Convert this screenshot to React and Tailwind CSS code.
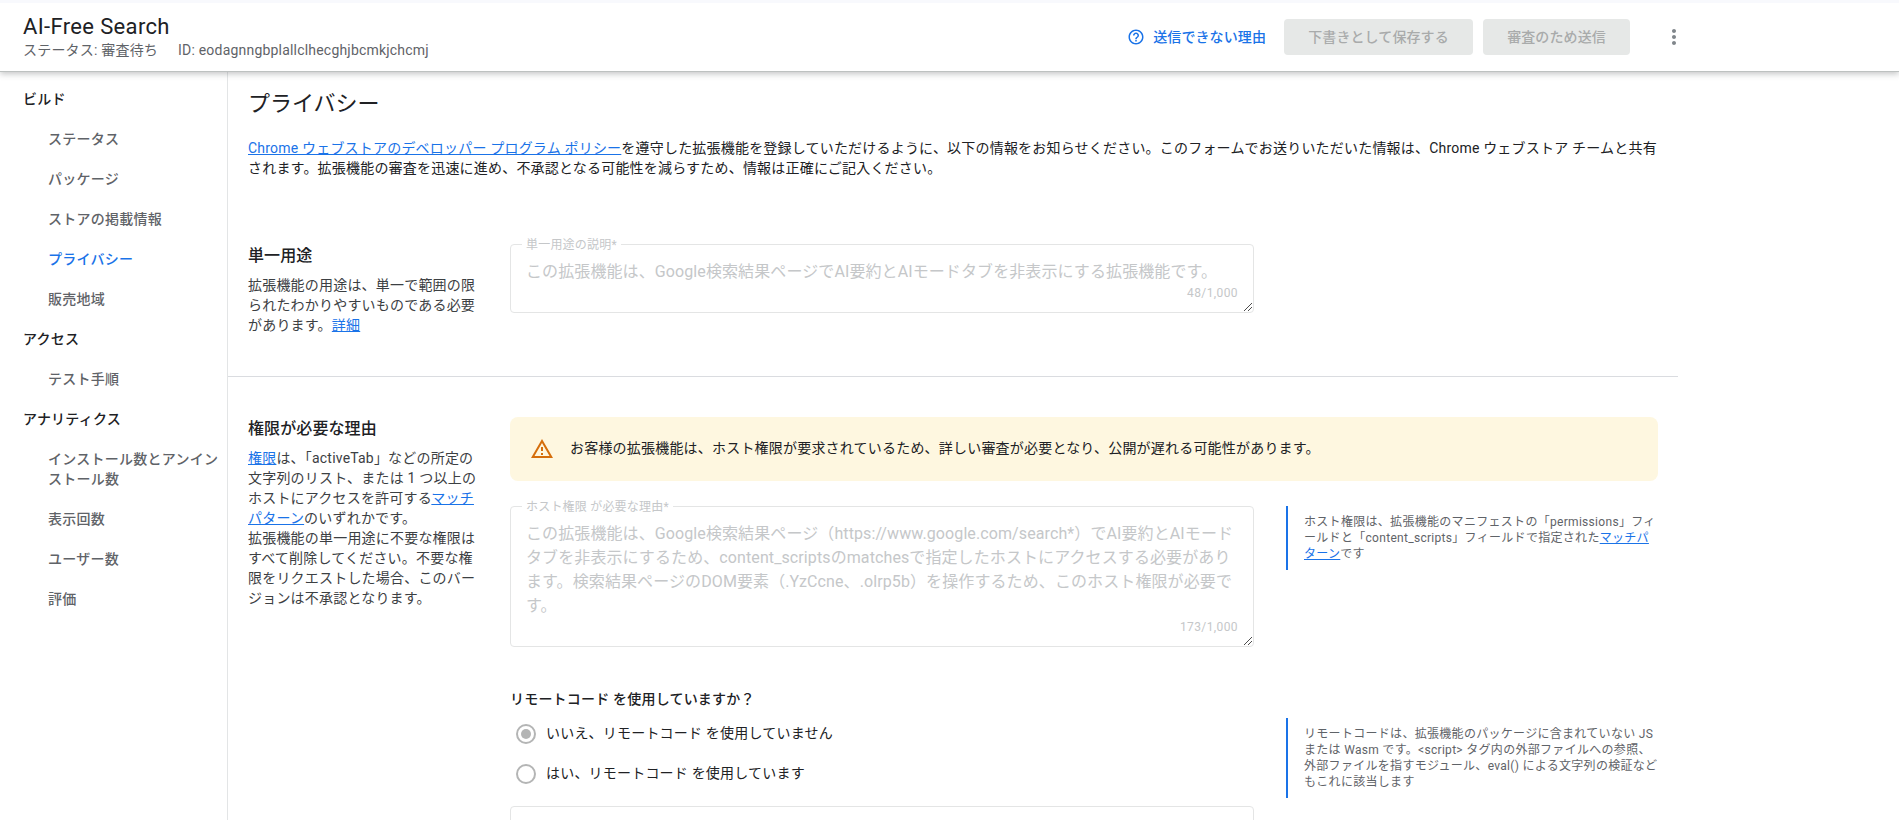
const FONT = "font-['Roboto','Noto_Sans_CJK_JP',sans-serif]";

function NavHead({ children }) {
  return <div className="h-10 pl-[23px] pt-2.5 text-sm leading-5 font-medium tracking-[0.2px] text-[#202124]">{children}</div>;
}

function NavItem({ children, active }) {
  return (
    <a className={"block py-2.5 pl-12 text-sm leading-5 font-medium tracking-[0.25px] " + (active ? "text-[#1a73e8]" : "text-[#5f6368]")}>
      {children}
    </a>
  );
}

function Link({ children }) {
  return <a className="text-[#1a73e8] underline">{children}</a>;
}

function Grip() {
  return (
    <svg className="absolute right-[1px] bottom-[1px]" width="8" height="8" viewBox="0 0 8 8" shapeRendering="crispEdges">
      {[[0, 7], [1, 6], [2, 5], [3, 4], [4, 3], [5, 2], [6, 1], [7, 0], [4, 7], [5, 6], [6, 5], [7, 4]].map(([x, y]) => (
        <rect key={x + "-" + y} x={x} y={y} width="1" height="1" fill="#4d4d4d" />
      ))}
    </svg>
  );
}

function Field({ label, count, height, children }) {
  return (
    <div className={"relative flex w-[744px] flex-col rounded-[4px] border border-[#e4e5e5] text-[#c5c7c9] " + height}>
      <span className="absolute -top-2.5 left-[11px] bg-white px-1 text-xs leading-5 tracking-[0.2px]">{label}</span>
      <div className="mt-[15px] pr-4 pl-[15px] text-base leading-6 tracking-[0.1px]">{children}</div>
      <div className="-mt-px pr-[15px] text-right text-xs leading-5 tracking-[0.4px]">{count}</div>
      <Grip />
    </div>
  );
}

function Hint({ children }) {
  return (
    <aside className="ml-8 w-[372px] border-l-2 border-[#1a73e8] py-2 pl-4 text-xs leading-4 tracking-[0.3px] text-[#5f6368]">
      {children}
    </aside>
  );
}

function Radio({ checked, children }) {
  return (
    <label className="flex h-10 items-center pl-1.5 text-sm leading-5 tracking-[0.2px] text-[#202124]">
      <span className="flex size-5 items-center justify-center rounded-full border-2 border-[#b4b5b5]">
        {checked && <span className="size-2.5 rounded-full bg-[#b4b5b5]" />}
      </span>
      <span className="-mt-0.5 pl-2.5">{children}</span>
    </label>
  );
}

export default function App() {
  return (
    <div lang="ja" className={"flex h-[820px] w-full flex-col overflow-hidden bg-white text-[#202124] " + FONT}>
      <div className="z-20 h-[3px] shrink-0 bg-[#f8f9fd]" />
      <header className="z-10 flex h-[68px] shrink-0 items-start bg-white shadow-[0_1px_0_#bdc1c0,0_3px_6px_rgba(60,64,67,0.3)]">
        <div className="flex-1 pt-2.5 pl-[23px]">
          <h1 className="text-[22px] leading-7 tracking-[0.35px]">AI-Free Search</h1>
          <div className="-mt-px flex gap-5 text-sm leading-5 tracking-[0.2px] text-[#5f6368]">
            <span>ステータス: 審査待ち</span>
            <span>ID: eodagnngbplallclhecghjbcmkjchcmj</span>
          </div>
        </div>
        <div className="flex items-center pt-4 pr-[213px] text-sm font-medium tracking-[0.1px]">
          <svg width="18" height="18" viewBox="0 0 24 24" fill="#1a73e8">
            <path d="M11 18h2v-2h-2v2zm1-16C6.48 2 2 6.48 2 12s4.48 10 10 10 10-4.48 10-10S17.52 2 12 2zm0 18c-4.41 0-8-3.59-8-8s3.59-8 8-8 8 3.59 8 8-3.59 8-8 8zm0-14c-2.21 0-4 1.79-4 4h2c0-1.1.9-2 2-2s2 .9 2 2c0 2-3 1.75-3 5h2c0-2.25 3-2.5 3-5 0-2.21-1.79-4-4-4z" />
          </svg>
          <span className="pr-[18px] pl-2 text-[#1a73e8]">送信できない理由</span>
          <button className="h-9 w-[189px] rounded-[4px] bg-[#e6e8e7] text-[#a9abab]">下書きとして保存する</button>
          <button className="ml-2.5 h-9 w-[147px] rounded-[4px] bg-[#e6e8e7] text-[#a9abab]">審査のため送信</button>
          <svg className="ml-8" width="24" height="24" viewBox="0 0 24 24" fill="#80868b">
            <path d="M12 8c1.1 0 2-.9 2-2s-.9-2-2-2-2 .9-2 2 .9 2 2 2zm0 2c-1.1 0-2 .9-2 2s.9 2 2 2 2-.9 2-2-.9-2-2-2zm0 6c-1.1 0-2 .9-2 2s.9 2 2 2 2-.9 2-2-.9-2-2-2z" />
          </svg>
        </div>
      </header>
      <div className="flex min-h-0 flex-1">
        <nav className="w-[228px] shrink-0 border-r border-[#e3e5e6] pt-2">
          <NavHead>ビルド</NavHead>
          <NavItem>ステータス</NavItem>
          <NavItem>パッケージ</NavItem>
          <NavItem>ストアの掲載情報</NavItem>
          <NavItem active>プライバシー</NavItem>
          <NavItem>販売地域</NavItem>
          <NavHead>アクセス</NavHead>
          <NavItem>テスト手順</NavItem>
          <NavHead>アナリティクス</NavHead>
          <NavItem>インストール数とアンインストール数</NavItem>
          <NavItem>表示回数</NavItem>
          <NavItem>ユーザー数</NavItem>
          <NavItem>評価</NavItem>
        </nav>
        <main className="w-[1450px] shrink-0">
          <section className="h-[306px] border-b border-[#dadce0] px-5 pt-[19px]">
            <h2 className="text-[22px] leading-7">プライバシー</h2>
            <p className="mt-5 text-sm leading-5 tracking-[0.2px]">
              <Link>Chrome ウェブストアのデベロッパー プログラム ポリシー</Link>
              を遵守した拡張機能を登録していただけるように、以下の情報をお知らせください。このフォームでお送りいただいた情報は、Chrome ウェブストア チームと共有されます。拡張機能の審査を迅速に進め、不承認となる可能性を減らすため、情報は正確にご記入ください。
            </p>
            <div className="mt-[66px] flex items-start">
              <div className="w-[262px] shrink-0 pr-6">
                <h3 className="text-base leading-6 font-medium tracking-[0.1px]">単一用途</h3>
                <p className="mt-[7px] text-sm leading-5 tracking-[0.2px] text-[#3c4043]">
                  拡張機能の用途は、単一で範囲の限られたわかりやすいものである必要があります。<Link>詳細</Link>
                </p>
              </div>
              <Field label="単一用途の説明*" count="48/1,000" height="h-[69px]">
                この拡張機能は、Google検索結果ページでAI要約とAIモードタブを非表示にする拡張機能です。
              </Field>
            </div>
          </section>
          <section className="flex px-5 pt-10">
            <div className="w-[262px] shrink-0 pr-6">
              <h3 className="text-base leading-6 font-medium tracking-[0.1px]">権限が必要な理由</h3>
              <p className="mt-[7px] text-sm leading-5 tracking-[0.2px] text-[#3c4043]">
                <Link>権限</Link>は、「activeTab」などの所定の文字列のリスト、または 1 つ以上のホストにアクセスを許可する<Link>マッチパターン</Link>のいずれかです。
                <br />
                拡張機能の単一用途に不要な権限はすべて削除してください。不要な権限をリクエストした場合、このバージョンは不承認となります。
              </p>
            </div>
            <div className="w-[1148px] shrink-0">
              <div className="flex h-16 items-center rounded-lg bg-[#fef7e0] pl-5 text-sm tracking-[0.2px]">
                <svg width="24" height="24" viewBox="0 0 24 24" fill="#d56e0c">
                  <path d="M12 5.99L19.53 19H4.47L12 5.99M12 2L1 21h22L12 2zm1 14h-2v2h2v-2zm0-6h-2v4h2v-4z" />
                </svg>
                <span className="-mt-0.5 pl-4">お客様の拡張機能は、ホスト権限が要求されているため、詳しい審査が必要となり、公開が遅れる可能性があります。</span>
              </div>
              <div className="mt-[25px] flex items-start">
                <Field label="ホスト権限 が必要な理由*" count="173/1,000" height="h-[141px]">
                  この拡張機能は、Google検索結果ページ（https://www.google.com/search*）でAI要約とAIモードタブを非表示にするため、content_scriptsのmatchesで指定したホストにアクセスする必要があります。検索結果ページのDOM要素（.YzCcne、.olrp5b）を操作するため、このホスト権限が必要です。
                </Field>
                <Hint>
                  ホスト権限は、拡張機能のマニフェストの「permissions」フィールドと「content_scripts」フィールドで指定された<Link>マッチパターン</Link>です
                </Hint>
              </div>
              <h4 className="mt-[42px] text-sm leading-5 font-medium tracking-[0.2px]">リモートコード を使用していますか？</h4>
              <div className="mt-[5px] flex items-start">
                <div className="w-[744px]">
                  <Radio checked>いいえ、リモートコード を使用していません</Radio>
                  <Radio>はい、リモートコード を使用しています</Radio>
                  <div className="mt-3 h-[69px] rounded-[4px] border border-[#e4e5e5]" />
                </div>
                <div className="mt-1">
                  <Hint>
                    リモートコードは、拡張機能のパッケージに含まれていない JS または Wasm です。&lt;script&gt; タグ内の外部ファイルへの参照、外部ファイルを指すモジュール、eval() による文字列の検証などもこれに該当します
                  </Hint>
                </div>
              </div>
            </div>
          </section>
        </main>
      </div>
    </div>
  );
}
